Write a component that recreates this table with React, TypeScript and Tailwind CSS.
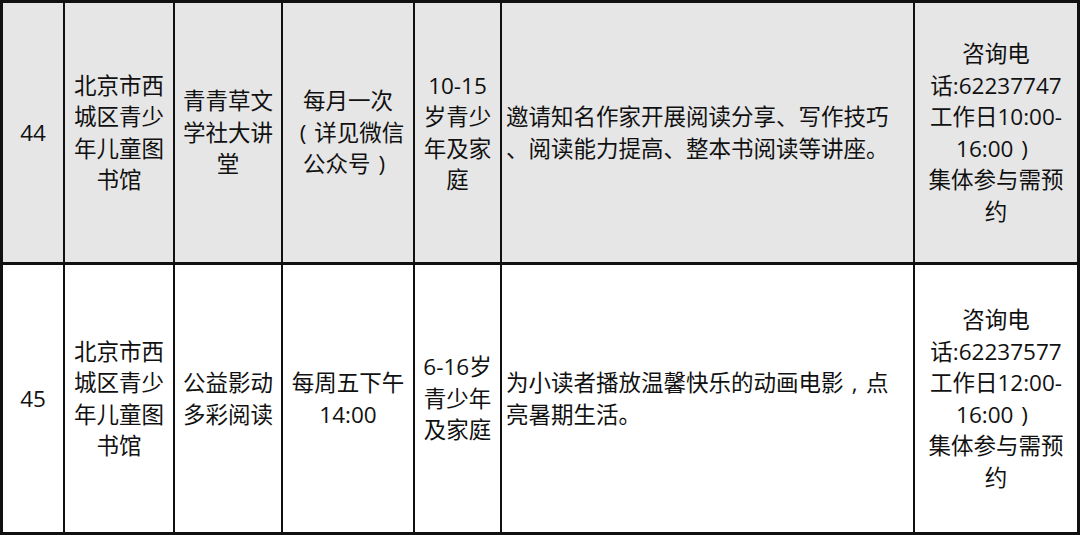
const rows = [
  {
    bg: 'bg-[#e6e6e6]',
    h: 'h-[259px]',
    cells: [
      ['44'],
      ['北京市西', '城区青少', '年儿童图', '书馆'],
      ['青青草文', '学社大讲', '堂'],
      ['每月一次', '（详见微信', '公众号）'],
      ['10-15', '岁青少', '年及家', '庭'],
      ['邀请知名作家开展阅读分享、写作技巧', '、阅读能力提高、整本书阅读等讲座。'],
      ['咨询电', '话:62237747', '工作日10:00-', '16:00）', '集体参与需预', '约'],
    ],
  },
  {
    bg: 'bg-white',
    h: 'h-[267px]',
    cells: [
      ['45'],
      ['北京市西', '城区青少', '年儿童图', '书馆'],
      ['公益影动', '多彩阅读'],
      ['每周五下午', '14:00'],
      ['6-16岁', '青少年', '及家庭'],
      ['为小读者播放温馨快乐的动画电影，点', '亮暑期生活。'],
      ['咨询电', '话:62237577', '工作日12:00-', '16:00）', '集体参与需预', '约'],
    ],
  },
];

// full-width brackets and comma drawn centred in a 1em box, like the source font does
const narrow: Record<string, string> = { '（': '(', '）': ')', '，': ',' };

const Line = ({ text }: { text: string }) => {
  const parts = text.split(/([（），])/).filter(Boolean);
  return (
    <div>
      {parts.map((p, i) =>
        narrow[p] ? (
          <span key={i} className="inline-block w-[1em] text-center">
            {narrow[p]}
          </span>
        ) : (
          <span key={i}>{p}</span>
        )
      )}
    </div>
  );
};

const App = () => {
  return (
    <div
      className="w-[1080px] h-[535px] bg-[#111] p-[3px] text-[#111] text-[22.5px] leading-[31.5px]"
      style={{ fontFamily: '"Open Sans", "Noto Sans CJK SC", sans-serif' }}
    >
      <div className="grid grid-cols-[60px_108px_106px_130px_85px_411px_162px] gap-x-[2px] gap-y-[3px]">
        {rows.map((row, r) =>
          row.cells.map((lines, c) => (
            <div
              key={`${r}-${c}`}
              className={`${row.bg} ${row.h} flex flex-col justify-center whitespace-nowrap overflow-hidden ${
                c === 5 ? 'items-start pl-[4px]' : 'items-center text-center'
              }`}
            >
              {lines.map((line, i) => (
                <Line key={i} text={line} />
              ))}
            </div>
          ))
        )}
      </div>
    </div>
  );
};

export default App;
